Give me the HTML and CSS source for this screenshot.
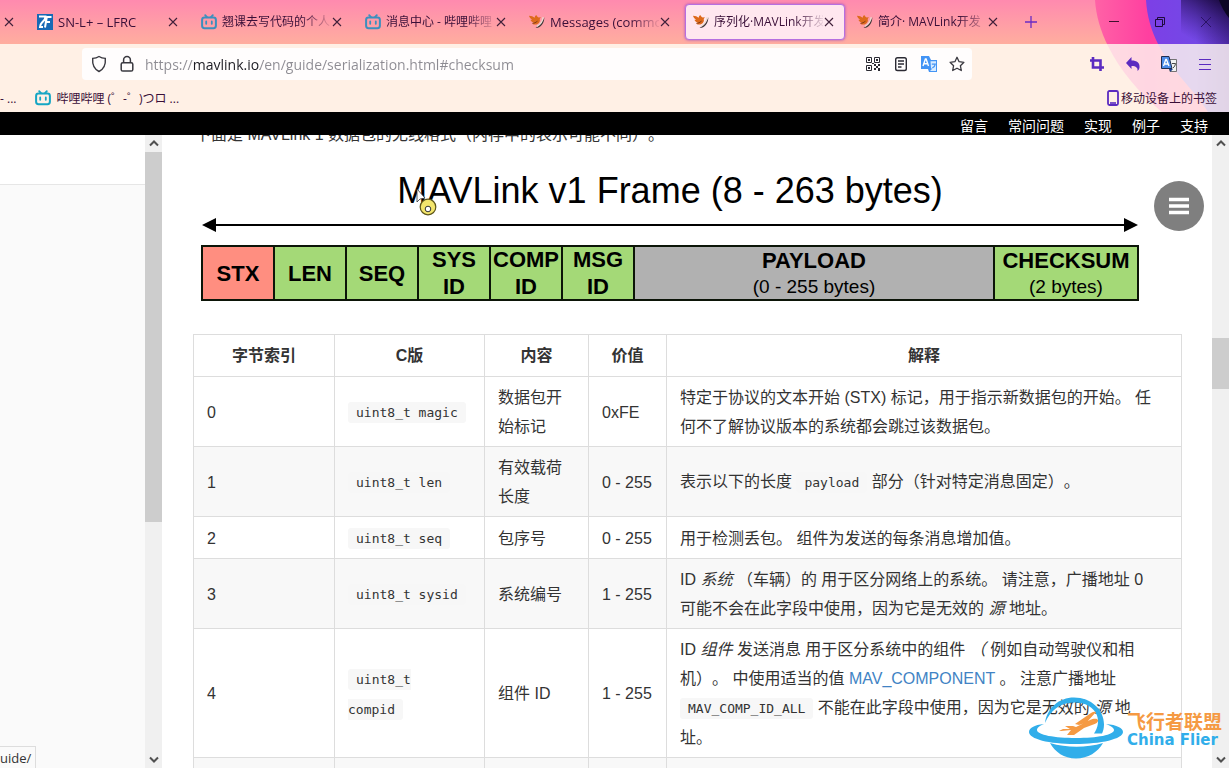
FILE: index.html
```html
<!DOCTYPE html>
<html lang="zh-CN">
<head>
<meta charset="utf-8">
<title>序列化·MAVLink开发指南</title>
<link rel="stylesheet" href="styles.css">
</head>
<body>
<svg width="0" height="0" class="defs" aria-hidden="true">
  <symbol id="bili" viewBox="0 0 16 16"><path d="M4.2 1.2 6 3.2M11.8 1.2 10 3.2" stroke="currentColor" stroke-width="1.8" stroke-linecap="round"/><rect x="1.1" y="3.6" width="13.8" height="10.6" rx="2.4" fill="none" stroke="currentColor" stroke-width="2"/><path d="M5.2 7.4v2.4M10.8 7.4v2.4" stroke="currentColor" stroke-width="1.8" stroke-linecap="round"/></symbol>
  <symbol id="close" viewBox="0 0 10 10"><path d="M1 1l8 8M9 1 1 9" stroke="currentColor" stroke-width="1.1" fill="none"/></symbol>
  <symbol id="bird" viewBox="0 0 16 16"><path d="M6.500 13.800c4.500.4 8.700-3.800 8.900-10.600-2.200 4.700-4.200 7.600-8.900 10.600z" fill="#3f3638"/><path d="M8 12.300c3.200-1.500 5.600-4.800 6.200-9.100" stroke="#eadbd2" stroke-width="1.300" fill="none"/><path d="M0 1.800c2.400.2 4.200.8 5.600 1.900.2-1.200.8-2.100 1.700-2.700.5 1.100 1.200 1.900 2.300 2.400l2.300-.2-1.200 1.900c.5 1.600.1 3.100-1.100 4.200-1.600 1.500-4.300 1.700-6.400.4l2-.7C3.500 8.500 2 7.300 1.400 5.700l1.800.2C1.500 4.800.5 3.500 0 1.800z" fill="#dd6a1c"/><path d="M3.500 9.400 6 8.800l2.500-1.600" stroke="#7c3513" stroke-width=".9" fill="none"/></symbol>
  <symbol id="chev" viewBox="0 0 10 7"><path d="M1 5.500 5 1.500l4 4" fill="none" stroke="#505050" stroke-width="2"/></symbol>
</svg>

<header class="chrome">
  <svg class="swirl" viewBox="0 0 160 112" preserveAspectRatio="none" aria-hidden="true">
    <defs>
      <linearGradient id="g2" x1="0" y1="0" x2="1" y2="0"><stop offset="0" stop-color="#ff62a6"/><stop offset=".4" stop-color="#ff3fa0"/><stop offset="1" stop-color="#ff5c8c"/></linearGradient>
      <linearGradient id="g3" x1="0" y1="0" x2="1" y2="0"><stop offset="0" stop-color="#7d3fe6"/><stop offset=".6" stop-color="#7448e6"/><stop offset="1" stop-color="#5a34b8"/></linearGradient>
      <linearGradient id="g4" x1=".4" y1="1" x2="1" y2="0"><stop offset="0" stop-color="#2a1070" stop-opacity="0"/><stop offset="1" stop-color="#160736"/></linearGradient>
    </defs>
    <path d="M26 0c1 16 6 32 13 46 12 24 30 46 54 66H160V0z" fill="url(#g2)"/>
    <path d="M77 0c1 16 5 30 12 44 16 30 38 48 50 68H160V0z" fill="url(#g3)"/>
    <path d="M112 0h48v44h-48z" fill="url(#g4)"/>
    <path d="M150 0c2 6 6 13 10 18V0z" fill="#0c0624"/>
  </svg>
  <nav class="tabs" aria-label="标签页">
    <div class="tab tab-cut"><button class="x" aria-label="关闭"><svg><use href="#close"/></svg></button></div>
    <div class="tab"><svg class="fav" viewBox="0 0 16 16"><rect width="16" height="16" fill="#1769b5"/><path d="M2 2.500h6.500c0 3-1.500 4-3.500 6-1.200 1.200-1.800 2.500-2 4.500h3M9.500 3h5M9.800 3 8 13.500M9 8h4" fill="none" stroke="#fff" stroke-width="2"/></svg><span class="label">SN-L+ – LFRC</span><button class="x" aria-label="关闭"><svg><use href="#close"/></svg></button></div>
    <div class="tab"><svg class="fav blue"><use href="#bili"/></svg><span class="label zh">翘课去写代码的个人</span><button class="x" aria-label="关闭"><svg><use href="#close"/></svg></button></div>
    <div class="tab"><svg class="fav blue"><use href="#bili"/></svg><span class="label zh">消息中心 - 哔哩哔哩</span><button class="x" aria-label="关闭"><svg><use href="#close"/></svg></button></div>
    <div class="tab"><svg class="fav"><use href="#bird"/></svg><span class="label">Messages (common)</span><button class="x" aria-label="关闭"><svg><use href="#close"/></svg></button></div>
    <div class="tab active"><svg class="fav"><use href="#bird"/></svg><span class="label zh">序列化·MAVLink开发</span><button class="x" aria-label="关闭"><svg><use href="#close"/></svg></button></div>
    <div class="tab"><svg class="fav"><use href="#bird"/></svg><span class="label zh">简介· MAVLink开发</span><button class="x" aria-label="关闭"><svg><use href="#close"/></svg></button></div>
    <button class="newtab" aria-label="新标签页"><svg width="12" height="12" viewBox="0 0 12 12"><path d="M6 0v12M0 6h12" stroke="#6b2bc4" stroke-width="1.300"/></svg></button>
    <div class="winbtns">
      <button aria-label="最小化"><svg width="12" height="12" viewBox="0 0 12 12"><path d="M1 5.500h10" stroke="#40102e"/></svg></button>
      <button aria-label="还原"><svg width="12" height="12" viewBox="0 0 12 12"><path d="M1.500 3.500h7v7h-7zM3.500 3.500v-2h7v7h-2" fill="none" stroke="#1e0b3c"/></svg></button>
      <button aria-label="关闭窗口"><svg width="12" height="12" viewBox="0 0 12 12"><path d="M1 1l10 10M11 1 1 11" stroke="#2a1364" fill="none"/></svg></button>
    </div>
  </nav>
  <div class="bars">
    <div class="toolbar">
      <div class="urlbar">
        <svg width="16" height="18" viewBox="0 0 16 18"><path d="M8 1.500c2 1.300 4 1.800 6.300 1.900C14.800 9 13 14 8 16.500 3 14 1.200 9 1.700 3.400 4 3.300 6 2.800 8 1.500z" fill="none" stroke="#39383f" stroke-width="1.400"/></svg>
        <svg width="16" height="18" viewBox="0 0 16 18"><rect x="2.200" y="7.700" width="11.600" height="8.300" rx="1.600" fill="none" stroke="#39383f" stroke-width="1.500"/><path d="M4.600 7.500V4.900a3.400 3.400 0 0 1 6.800 0v2.600" fill="none" stroke="#39383f" stroke-width="1.500"/></svg>
        <input class="url" type="text" aria-label="地址" value="https://mavlink.io/en/guide/serialization.html#checksum">
        <div class="urlicons">
          <button aria-label="二维码"><svg width="16" height="16" viewBox="0 0 16 16"><path d="M1.500 1.500h5v5h-5zM9.500 1.500h5v5h-5zM1.500 9.500h5v5h-5z" fill="none" stroke="#2b2a33"/><path d="M3 3h2v2H3zM11 3h2v2h-2zM3 11h2v2H3zM9 8h2v2H9zM11 10h2v2h-2zM13 8h2v2h-2zM9 12h2v2H9zM13 12h2v3h-2zM7 7h2v1H7z" fill="#2b2a33"/></svg></button>
          <button aria-label="阅读模式"><svg width="16" height="16" viewBox="0 0 16 16"><rect x="2.700" y="1.700" width="10.600" height="12.800" rx="1.800" fill="none" stroke="#2b2a33" stroke-width="1.400"/><path d="M5 5h6M5 8h6M5 11h3.500" stroke="#2b2a33" stroke-width="1.300"/></svg></button>
          <button aria-label="翻译"><svg width="16" height="16" viewBox="0 0 16 16"><path d="M0 0h8l2 4h6v12H8l-1-3H0z" fill="#4394f5"/><path d="M9.500 5.200H15V15H9l2-2-1-1z" fill="#d8ebff"/><path d="M2 10 4.400 3h.7l2.400 7M3 7.700h3.500" stroke="#fff" stroke-width="1.400" fill="none"/><path d="M10.800 8.200h3.500c-.3 2-1.500 3-3 3.800" stroke="#4394f5" stroke-width="1.200" fill="none"/></svg></button>
          <button aria-label="加入书签"><svg width="16" height="16" viewBox="0 0 16 16"><path d="m8 1.300 2.100 4.400 4.800.6-3.500 3.400.9 4.800L8 12.200l-4.300 2.300.9-4.800L1.100 6.300l4.800-.6z" fill="none" stroke="#39383f" stroke-width="1.300" stroke-linejoin="round"/></svg></button>
        </div>
      </div>
      <div class="tools">
        <button aria-label="截图"><svg width="16" height="16" viewBox="0 0 16 16"><path d="M4 1v10.500h11M1 4.500h10.500V15" fill="none" stroke="#5b2bc0" stroke-width="2.600"/></svg></button>
        <button aria-label="撤销"><svg width="16" height="16" viewBox="0 0 16 16"><path d="M6.500 1v3.500C12 4.500 15 7 14.500 11.500c-.2 1.500-.8 2.700-2 3.500.5-3-1.200-5-6-5v3L1 7z" fill="#5b2bc0"/></svg></button>
        <button aria-label="翻译页面"><svg width="16" height="16" viewBox="0 0 16 16"><path d="M7 3.500h8.500v12H9z" fill="#f2f2f2" stroke="#555" stroke-width=".8"/><path d="M.5.500H8L11 12.500H.5z" fill="#4c8be8" stroke="#1f2d52"/><path d="M2.500 10 4.800 3.500h.6L8 10M3.500 8h3.500" stroke="#fff" stroke-width="1.300" fill="none"/><path d="M11 7.500h3.500c-.2 2-1.200 3.300-2.500 4.500" stroke="#444" fill="none"/><path d="M8 13h4l-2.500 2.800z" fill="#1f3f8f"/></svg></button>
        <button aria-label="菜单"><svg width="16" height="16" viewBox="0 0 16 16"><path d="M2 3.500h12M2 8.500h12M2 13.500h12" stroke="#5b2bc0"/></svg></button>
      </div>
    </div>
    <div class="bookmarks">
      <a href="#">- ...</a>
      <a href="#"><svg class="fav cyan"><use href="#bili"/></svg>哔哩哔哩 (゜-゜)つロ ...</a>
      <a href="#" class="mobile"><svg width="14" height="16" viewBox="0 0 14 16"><rect x="2" y="1" width="10" height="14" rx="1.500" fill="none" stroke="#5b2bc0" stroke-width="1.800"/><path d="M4 13h6" stroke="#5b2bc0" stroke-width="1.600"/></svg>移动设备上的书签</a>
    </div>
  </div>
</header>

<nav class="sitenav"><a href="#">留言</a><a href="#">常问问题</a><a href="#">实现</a><a href="#">例子</a><a href="#">支持</a></nav>

<div class="page">
  <aside class="side"><div class="side-top"></div></aside>
  <div class="scroll side-scroll"><svg><use href="#chev"/></svg><div class="thumb"></div><svg class="down"><use href="#chev"/></svg></div>

  <main class="content">
    <p class="intro">下面是 MAVLink 1 数据包的无线格式（内存中的表示可能不同）。</p>
    <figure class="frame">
      <figcaption>MAVLink v1 Frame (8 - 263 bytes)</figcaption>
      <div class="arrow"><svg width="14" height="14" viewBox="0 0 14 14"><path d="M14 0v14L0 7z"/></svg><span></span><svg width="14" height="14" viewBox="0 0 14 14"><path d="M0 0v14l14-7z"/></svg></div>
      <div class="fields">
        <div class="stx">STX</div><div>LEN</div><div>SEQ</div><div>SYS<br>ID</div><div>COMP<br>ID</div><div>MSG<br>ID</div>
        <div class="payload">PAYLOAD<small>(0 - 255 bytes)</small></div><div>CHECKSUM<small>(2 bytes)</small></div>
      </div>
    </figure>
    <table>
      <colgroup><col class="c1"><col class="c2"><col class="c3"><col class="c4"><col></colgroup>
      <thead><tr><th>字节索引</th><th>C版</th><th>内容</th><th>价值</th><th>解释</th></tr></thead>
      <tbody>
        <tr><td>0</td><td><code>uint8_t magic</code></td><td>数据包开始标记</td><td>0xFE</td><td>特定于协议的文本开始 (STX) 标记，用于指示新数据包的开始。 任<br>何不了解协议版本的系统都会跳过该数据包。</td></tr>
        <tr><td>1</td><td><code>uint8_t len</code></td><td>有效载荷长度</td><td>0 - 255</td><td>表示以下的长度 <code>payload</code> 部分（针对特定消息固定）。</td></tr>
        <tr><td>2</td><td><code>uint8_t seq</code></td><td>包序号</td><td>0 - 255</td><td>用于检测丢包。 组件为发送的每条消息增加值。</td></tr>
        <tr><td>3</td><td><code>uint8_t sysid</code></td><td>系统编号</td><td>1 - 255</td><td>ID <em>系统</em> （车辆）的 用于区分网络上的系统。 请注意，广播地址 0<br>可能不会在此字段中使用，因为它是无效的 <em>源</em> 地址。</td></tr>
        <tr><td>4</td><td><code>uint8_t<br>compid</code></td><td>组件 ID</td><td>1 - 255</td><td>ID <em>组件</em> 发送消息 用于区分系统中的组件 <em>（</em> 例如自动驾驶仪和相<br>机）。 中使用适当的值 <a href="#">MAV_COMPONENT</a> 。 注意广播地址<br><code>MAV_COMP_ID_ALL</code> 不能在此字段中使用，因为它是无效的 <em>源</em> 地<br>址。</td></tr>
        <tr><td></td><td></td><td></td><td></td><td></td></tr>
      </tbody>
    </table>
  </main>
  <div class="scroll main-scroll"><svg><use href="#chev"/></svg><div class="thumb"></div><svg class="down"><use href="#chev"/></svg></div>
</div>

<button class="fab" aria-label="目录"><svg width="20" height="18" viewBox="0 0 20 18"><path d="M0 2.500h20M0 9h20M0 15.500h20" stroke="#fff" stroke-width="3.600"/></svg></button>
<div class="status">uide/</div>
<svg class="pointer" width="22" height="30" viewBox="0 0 22 30" aria-hidden="true"><path d="M1 1v13l3-3 5-1z" fill="#fff" stroke="#333" stroke-width=".8"/><circle cx="12" cy="19" r="7.800" fill="#f3e56c" stroke="#5c5418" stroke-width="1.200"/><circle cx="12" cy="21" r="2.800" fill="#fff" stroke="#333"/></svg>
<div class="mark">
  <svg width="96" height="64" viewBox="0 0 96 64" aria-hidden="true">
    <path d="M17 28C19 13 31 2.500 46 2.500c17 0 30 12 30 27 0 4-1 7-2 9h-8c4-6 5-12 3-18C66 12 57 7.500 46 7.500 32 7.500 22 16 17 28z" fill="#31aeea"/>
    <path d="M16 29C6 30 1 33 1 37c0 7 20 12 46 12s48-5 48-12c0-4-6-7-17-8 5 2 8 4 8 6 0 5-17 8-38 8S9 40 9 35c0-2 2-4 7-6z" fill="#31aeea"/>
    <path d="M22 48c17 5 36 5 53 0-5 9-15 15.500-27 15.500S27 57 22 48z" fill="#31aeea"/>
    <path d="M21 34h21l-5-3h8l3 1 14-7c3-1.500 7-2 8 0 .5 2-2 4-6 5l-8 3-10 7h-7l4-5-10 1H31l4-2H21zM47 29l16-11c2-1.200 3.500-1.500 5-1l-9 10-8 3z" fill="#f59a43"/>
  </svg>
  <div><strong>飞行者联盟</strong><b>China Flier</b></div>
</div>
</body>
</html>
```

FILE: styles.css
```css
* { box-sizing: border-box; }
body { margin: 0; height: 100vh; display: flex; flex-direction: column; overflow: hidden; position: relative; background: #fff; color: #333; font-family: "Liberation Sans", "Noto Sans CJK SC", sans-serif; font-size: 16px; text-spacing-trim: space-all; }
button { border: 0; padding: 0; background: none; display: flex; align-items: center; justify-content: center; }
a { text-decoration: none; color: inherit; }
.defs { position: absolute; }

.chrome { position: relative; flex: none; background: linear-gradient(#ff8aaf, #ffae9f 44px, #ffcdaf 44px); font-family: "Open Sans", "Noto Sans CJK SC", sans-serif; color: #3a0f38; }
.swirl { position: absolute; top: 0; right: 0; width: 160px; height: 100%; }
.tabs { position: relative; height: 44px; display: flex; align-items: center; gap: 4px; }
.tab { flex: none; width: 160px; height: 36px; display: flex; align-items: center; padding: 0 10px 0 8px; border-radius: 4px; }
.tab-cut { width: 25px; padding-right: 10px; justify-content: flex-end; }
.fav { width: 16px; height: 16px; flex: none; }
.blue { color: #3c8fbe; }
.cyan { color: #16a6c4; }
.label { flex: 1; min-width: 0; margin-left: 5px; overflow: hidden; white-space: nowrap; font-size: 13px; line-height: 20px; -webkit-mask-image: linear-gradient(90deg, #000 80px, transparent 112px); mask-image: linear-gradient(90deg, #000 80px, transparent 112px); }
.zh { font-size: 12px; }
.x { flex: none; width: 12px; height: 16px; color: #40203a; }
.x svg { width: 10px; height: 10px; }
.active { background: #ffe7ef; border: 1px solid #b66fe0; box-shadow: 0 0 3px #a050c0; padding: 0 9px 0 7px; }
.newtab { width: 32px; height: 32px; margin-left: 2px; }
.winbtns { margin-left: auto; display: flex; }
.winbtns button { width: 46px; height: 40px; }
.bars { position: relative; background: rgba(255, 248, 240, .82); }
.toolbar { height: 40px; display: flex; align-items: center; justify-content: space-between; padding: 0 12px 0 82px; }
.urlbar { flex: 0 1 890px; height: 32px; display: flex; align-items: center; gap: 12px; padding: 0 7px 0 9px; border-radius: 4px; background: #fffdfd; }
.url { flex: 1; min-width: 0; border: 0; padding: 0; margin-left: -2px; height: 24px; font: 14px "Open Sans", sans-serif; color: transparent; background: linear-gradient(90deg, #8d8b92 48px, #1c1b22 48px, #1c1b22 115px, #8d8b92 115px); -webkit-background-clip: text; background-clip: text; }
.urlicons { display: flex; gap: 12px; }
.tools { display: flex; gap: 16px; padding-right: 2px; }
.tools button { width: 20px; height: 24px; }
.bookmarks { height: 28px; display: flex; align-items: center; gap: 19px; padding: 0 12px 0 0; font-size: 12px; }
.bookmarks a { display: flex; align-items: center; gap: 5px; }
.bookmarks .mobile { margin-left: auto; gap: 1px; }

.sitenav { position: relative; z-index: 1; flex: none; height: 23px; background: #000; color: #fff; display: flex; justify-content: flex-end; gap: 20px; padding: 4px 21px 0 0; font-size: 14px; line-height: 20px; }

.page { flex: 1; min-height: 0; display: flex; }
.side { flex: none; width: 145px; background: #fafafa; }
.side-top { height: 50px; background: #fff; border-bottom: 1px solid #e6e6e6; }
.scroll { flex: none; width: 17px; background: #f0f0f0; display: flex; flex-direction: column; align-items: center; padding: 5px 0; }
.scroll svg { width: 10px; height: 7px; flex: none; }
.thumb { width: 17px; background: #cdcdcd; }
.down { margin-top: auto; transform: rotate(180deg); }
.side-scroll .thumb { height: 370px; margin-top: 5px; }
.main-scroll .thumb { height: 51px; margin-top: 191px; }

.content { flex: 1; min-width: 0; overflow: hidden; padding: 0 30px 0 31px; }
.intro { margin: -15px 0 0 2px; line-height: 29px; }
.frame { margin: 22px 43px 33px 8px; color: #000; }
.frame figcaption { text-align: center; font-size: 36px; line-height: 40px; white-space: nowrap; }
.arrow { display: flex; align-items: center; margin: 7px 1px 13px; }
.arrow span { flex: 1; height: 2px; background: #000; }
.fields { display: grid; grid-template-columns: repeat(6, minmax(0, 1fr)) minmax(0, 5fr) minmax(0, 2fr); grid-template-rows: 56px; border-right: 2px solid #0c1508; font-size: 22px; font-weight: bold; line-height: 27px; text-align: center; }
.fields div { background: #a4d977; border: 2px solid #0c1508; border-right: 0; display: flex; flex-direction: column; align-items: center; justify-content: center; white-space: nowrap; }
.fields .stx { background: #ff8e80; }
.fields .payload { background: #b1b1b1; }
.fields small { font-size: 19px; font-weight: normal; line-height: 25px; }

table { width: 100%; table-layout: fixed; border-collapse: collapse; line-height: 29px; }
.c1 { width: 141px; }
.c2 { width: 150px; }
.c3 { width: 104px; }
.c4 { width: 78px; }
th, td { height: 41px; border: 1px solid #ddd; padding: 6px 13px 5px; text-align: left; }
th { text-align: center; padding-bottom: 6px; }
tbody tr:nth-child(even) { background: #f8f8f8; }
code { font-family: "DejaVu Sans Mono", monospace; font-size: 13px; background: #f7f7f7; padding: 3px 8px; border-radius: 3px; }
td a { color: #4183c4; }

.fab { position: absolute; top: 181px; right: 25px; width: 50px; height: 50px; border-radius: 50%; background: #7f7f7f; }
.status { position: absolute; left: 0; bottom: 0; height: 22px; width: 36px; background: #fafafa; border: 1px solid #ddd; border-width: 1px 1px 0 0; font: 13px/22px "Open Sans", sans-serif; }
.pointer { position: absolute; left: 416px; top: 188px; }
.mark { position: absolute; right: 7px; bottom: 9px; display: flex; align-items: center; gap: 3px; }
.mark div { display: flex; flex-direction: column; margin-top: 8px; }
.mark strong { color: #f59a43; font-size: 19px; line-height: 18px; }
.mark b { color: #31aeea; font: bold 15px/16px "DejaVu Sans", sans-serif; }
```
